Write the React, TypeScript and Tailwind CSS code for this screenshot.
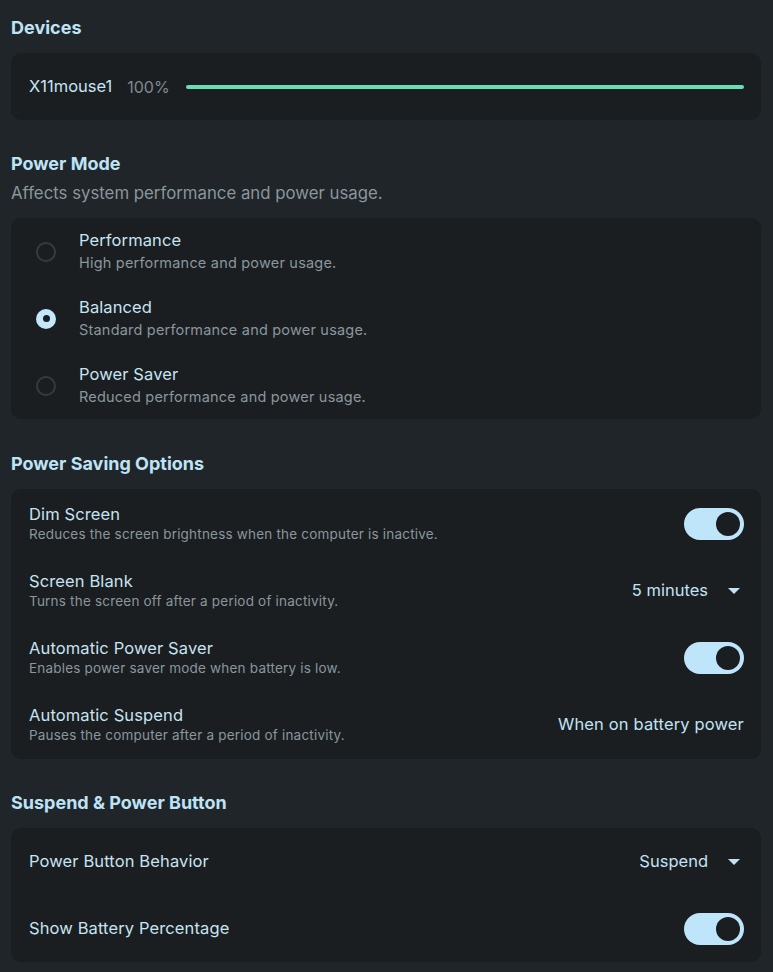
import React from "react";

const font = { fontFamily: "Inter, 'Noto Sans', sans-serif" };

function Heading({ children }: { children: React.ReactNode }) {
  return <h2 className="text-[18px] font-bold leading-[24px] text-[#bfe3f6]">{children}</h2>;
}

function Toggle() {
  return (
    <div className="w-[60px] h-[32px] rounded-full bg-[#bfe5fa] flex items-center justify-end pr-[4px]">
      <div className="w-[24px] h-[24px] rounded-full bg-[#1a1e21]" />
    </div>
  );
}

function Dropdown({ label }: { label: string }) {
  return (
    <div className="flex items-center gap-[20px] text-[16.5px] text-[#c3e2f3]">
      <span>{label}</span>
      <svg width="12" height="6" viewBox="0 0 12 6" className="mr-[4px]">
        <path d="M0 0 L12 0 L6 6 Z" fill="#c3e2f3" />
      </svg>
    </div>
  );
}

function Radio({ checked }: { checked?: boolean }) {
  if (checked)
    return (
      <div className="w-[20px] h-[20px] rounded-full bg-[#c3e7fb] flex items-center justify-center">
        <div className="w-[7px] h-[7px] rounded-full bg-[#1a1e21]" />
      </div>
    );
  return <div className="w-[20px] h-[20px] rounded-full border-2 border-[#353c40]" />;
}

function RadioRow({ title, sub, checked }: { title: string; sub: string; checked?: boolean }) {
  return (
    <div className="flex items-center h-[67px] pl-[25px]">
      <Radio checked={checked} />
      <div className="ml-[23px] flex flex-col">
        <span className="text-[16.5px] leading-[22px] tracking-[0.1px] text-[#c8e3f1]">{title}</span>
        <span className="text-[14.5px] leading-[24px] tracking-[0.2px] text-[#8a969d]">{sub}</span>
      </div>
    </div>
  );
}

function OptionRow({ title, sub, right }: { title: string; sub?: string; right: React.ReactNode }) {
  return (
    <div className="flex items-center justify-between h-[67px] pr-[17px] pl-[18px]">
      <div className="flex flex-col">
        <span className="text-[16.5px] leading-[21px] tracking-[0.12px] text-[#c8e3f1]">{title}</span>
        {sub && <span className="text-[13.5px] leading-[18px] tracking-[0.2px] text-[#8a969d]">{sub}</span>}
      </div>
      {right}
    </div>
  );
}

export default function App() {
  return (
    <div style={font} className="min-h-[972px] w-full bg-[#1f2528] pl-[11px] pr-[12px] pt-[16px] pb-[10px]">
      <Heading>Devices</Heading>
      <div className="mt-[13px] rounded-[10px] bg-[#1a1e21] h-[67px] flex items-center pl-[18px] pr-[17px]">
        <span className="text-[16.5px] text-[#c8e3f1]">X11mouse1</span>
        <span className="ml-[15px] text-[16px] text-[#7f8b92]">100%</span>
        <div className="ml-[16px] flex-1 h-[4px] rounded-full bg-[#66e0b2]" />
      </div>

      <div className="mt-[32px]">
        <Heading>Power Mode</Heading>
        <p className="mt-[5px] text-[16.8px] leading-[24px] text-[#8a969d]">Affects system performance and power usage.</p>
      </div>
      <div className="mt-[13px] rounded-[10px] bg-[#1a1e21] flex flex-col">
        <RadioRow title="Performance" sub="High performance and power usage." />
        <RadioRow title="Balanced" sub="Standard performance and power usage." checked />
        <RadioRow title="Power Saver" sub="Reduced performance and power usage." />
      </div>

      <div className="mt-[33px]">
        <Heading>Power Saving Options</Heading>
      </div>
      <div className="mt-[13px] rounded-[10px] bg-[#1a1e21] flex flex-col py-[1px]">
        <OptionRow title="Dim Screen" sub="Reduces the screen brightness when the computer is inactive." right={<Toggle />} />
        <OptionRow title="Screen Blank" sub="Turns the screen off after a period of inactivity." right={<Dropdown label="5 minutes" />} />
        <OptionRow title="Automatic Power Saver" sub="Enables power saver mode when battery is low." right={<Toggle />} />
        <OptionRow
          title="Automatic Suspend"
          sub="Pauses the computer after a period of inactivity."
          right={<span className="text-[16.5px] tracking-[0.15px] text-[#c3e2f3]">When on battery power</span>}
        />
      </div>

      <div className="mt-[32px]">
        <Heading>Suspend &amp; Power Button</Heading>
      </div>
      <div className="mt-[13px] rounded-[10px] bg-[#1a1e21] flex flex-col">
        <OptionRow title="Power Button Behavior" right={<Dropdown label="Suspend" />} />
        <OptionRow title="Show Battery Percentage" right={<Toggle />} />
      </div>
    </div>
  );
}
